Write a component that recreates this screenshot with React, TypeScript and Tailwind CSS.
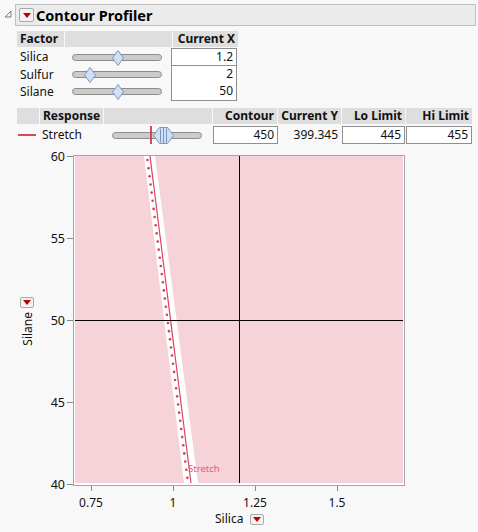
import React from 'react';

const RED = '#d9475d';

function RedButton({ w = 15, h = 14 }: { w?: number; h?: number }) {
  return (
    <div
      className="flex items-center justify-center border border-[#a9a9a9] rounded-[2px] bg-[#f3f3f3] shrink-0"
      style={{ width: w, height: h }}
    >
      <svg width="8" height="5" viewBox="0 0 8 5">
        <polygon points="0,0 8,0 4,5" fill="#c00000" />
      </svg>
    </div>
  );
}

function Track({ thumb }: { thumb: number }) {
  return (
    <div className="relative ml-[8px] w-[90px] h-[7px] rounded-full border border-[#8c8c8c] bg-[#cbcbcb]">
      <svg className="absolute top-[-5px]" style={{ left: thumb - 6 }} width="12" height="16" viewBox="0 0 12 16">
        <polygon points="6,0.5 11.5,8 6,15.5 0.5,8" fill="#cfe0f3" stroke="#7897c0" strokeWidth="1" />
      </svg>
    </div>
  );
}

function Head({ w, children, right }: { w: number; children?: React.ReactNode; right?: boolean }) {
  return (
    <div
      className={`h-[16px] bg-[#dedede] font-bold flex items-center px-[3px] ${right ? 'justify-end' : ''}`}
      style={{ width: w }}
    >
      {children}
    </div>
  );
}

function Box({ w, children, top = true }: { w: number; children: React.ReactNode; top?: boolean }) {
  return (
    <div
      className={`h-[18px] bg-white border-x border-b border-[#8f8f8f] ${top ? 'border-t' : ''} flex items-center justify-end px-[3px]`}
      style={{ width: w }}
    >
      {children}
    </div>
  );
}

const X = (v: number) => 37 + (v - 0.75) * 328;
const Y = (v: number) => 8 + (60 - v) * 16.4;

function Chart() {
  const dots: { x: number; y: number }[] = [];
  for (let y = 12; y < 334; y += 8.15) dots.push({ x: 93 + ((y - 8) * 41) / 327, y });
  return (
    <svg width="370" height="362" className="block">
      <g transform="translate(14,0)">
        <rect x="19.5" y="7.5" width="331" height="330" fill="#ffffff" stroke="#a6a6a6" />
        <rect x="21" y="8" width="328" height="327" fill="#f6d3d8" />
        <polygon points="90,8 101,8 144,335 130,335" fill="#ffffff" />
        <line x1="96" y1="8" x2="137" y2="335" stroke={RED} strokeWidth="1.2" />
        {dots.map((d, i) => (
          <circle key={i} cx={d.x} cy={d.y} r="1.3" fill="#d43f5a" />
        ))}
        <line x1="185.5" y1="8" x2="185.5" y2="335" stroke="#000" strokeWidth="1" />
        <line x1="21" y1="172.5" x2="349" y2="172.5" stroke="#000" strokeWidth="1" />
        <text x="134" y="324" fontSize="9.5" fill="#d9607a" fontFamily="'Noto Sans', sans-serif">Stretch</text>
        {[60, 55, 50, 45, 40].map((v) => (
          <g key={v}>
            <line x1="13" y1={Math.round(Y(v)) + 0.5} x2="19" y2={Math.round(Y(v)) + 0.5} stroke="#8a8a8a" />
            <text x="11" y={Y(v) + 4.5} fontSize="12.5" textAnchor="end" fill="#111" fontFamily="'Noto Sans', sans-serif">
              {v}
            </text>
          </g>
        ))}
        {[
          [0.75, '0.75'],
          [1, '1'],
          [1.25, '1.25'],
          [1.5, '1.5'],
        ].map(([v, l]) => (
          <g key={l as string}>
            <line x1={Math.round(X(v as number)) + 0.5} y1="338" x2={Math.round(X(v as number)) + 0.5} y2="343" stroke="#8a8a8a" />
            <text x={X(v as number)} y="359" fontSize="12" textAnchor="middle" fill="#111" fontFamily="'Noto Sans', sans-serif">
              {l}
            </text>
          </g>
        ))}
      </g>
    </svg>
  );
}

export default function App() {
  return (
    <div className="w-[478px] h-[532px] bg-[#f8f8f8] overflow-hidden text-[12px] text-[#111] font-['Noto_Sans',sans-serif] leading-none">
      {/* title bar */}
      <div className="flex items-start pt-[4px]">
        <div className="w-[15px] pt-[6px] pl-[4px]">
          <svg width="8" height="8" viewBox="0 0 8 8">
            <polygon points="7,1 7,7 1,7" fill="none" stroke="#7a7a7a" strokeWidth="1" />
          </svg>
        </div>
        <div className="w-[461px] h-[22px] border border-[#bdbdbd] bg-[#ebebeb] flex items-center pl-[3px] gap-[2px]">
          <RedButton />
          <span className="font-bold text-[14.5px] text-black">Contour Profiler</span>
        </div>
      </div>

      {/* factor table */}
      <div className="ml-[17px] mt-[5px]">
        <div className="flex gap-[1px]">
          <Head w={47}>Factor</Head>
          <Head w={107} />
          <Head w={65} right>Current X</Head>
        </div>
        <div className="mt-[1px]">
          {[
            ['Silica', 45, '1.2'],
            ['Sulfur', 17, '2'],
            ['Silane', 45, '50'],
          ].map(([name, t, val], i) => (
            <div key={name as string} className="flex items-center" style={{ height: i === 0 ? 18 : 17 }}>
              <div className="w-[47px] pl-[3px]">{name}</div>
              <div className="w-[107px]">
                <Track thumb={t as number} />
              </div>
              <Box w={66} top={i === 0}>{val}</Box>
            </div>
          ))}
        </div>
      </div>

      {/* response table */}
      <div className="ml-[17px] mt-[8px]">
        <div className="flex gap-[1px]">
          <Head w={22} />
          <Head w={63}>Response</Head>
          <Head w={108} />
          <Head w={64} right>Contour</Head>
          <Head w={63} right>Current Y</Head>
          <Head w={63} right>Lo Limit</Head>
          <Head w={66} right>Hi Limit</Head>
        </div>
        <div className="flex items-center mt-[2px] h-[18px]">
          <div className="w-[23px] pl-[1px]">
            <div className="w-[18px] h-[2px]" style={{ background: RED }} />
          </div>
          <div className="w-[64px] pl-[2px]">Stretch</div>
          <div className="w-[108px] relative h-[18px] flex items-center">
            <div className="ml-[8px] w-[90px] h-[7px] rounded-full border border-[#8c8c8c] bg-[#cbcbcb]" />
            <div className="absolute left-[46px] top-0 w-[1.5px] h-[18px]" style={{ background: RED }} />
            <svg className="absolute left-[49px] top-[1px]" width="21" height="17" viewBox="0 0 21 17">
              <polygon points="0.5,8.5 6.5,0.5 14.5,0.5 20.5,8.5 14.5,16.5 6.5,16.5" fill="#cfe0f3" stroke="#7897c0" />
              <line x1="7.5" y1="1.5" x2="7.5" y2="15.5" stroke="#7897c0" />
              <line x1="10.5" y1="0.5" x2="10.5" y2="16.5" stroke="#7897c0" />
              <line x1="13.5" y1="1.5" x2="13.5" y2="15.5" stroke="#7897c0" />
            </svg>
          </div>
          <div className="ml-[1px]">
            <Box w={65}>450</Box>
          </div>
          <div className="w-[64px] text-right pr-[4px]">399.345</div>
          <Box w={63}>445</Box>
          <div className="ml-[1px]">
            <Box w={66}>455</Box>
          </div>
        </div>
      </div>

      {/* chart */}
      <div className="flex mt-[4px]">
        <div className="w-[40px] flex flex-col items-start pl-[20px] pt-[149px] gap-[4px]">
          <RedButton w={14} h={11} />
          <span className="[writing-mode:vertical-rl] rotate-180 ml-[2px]">Silane</span>
        </div>
        <Chart />
      </div>
      <div className="flex items-center gap-[7px] pl-[215px] pt-[3px]">
        <span>Silica</span>
        <RedButton w={14} h={11} />
      </div>
    </div>
  );
}
